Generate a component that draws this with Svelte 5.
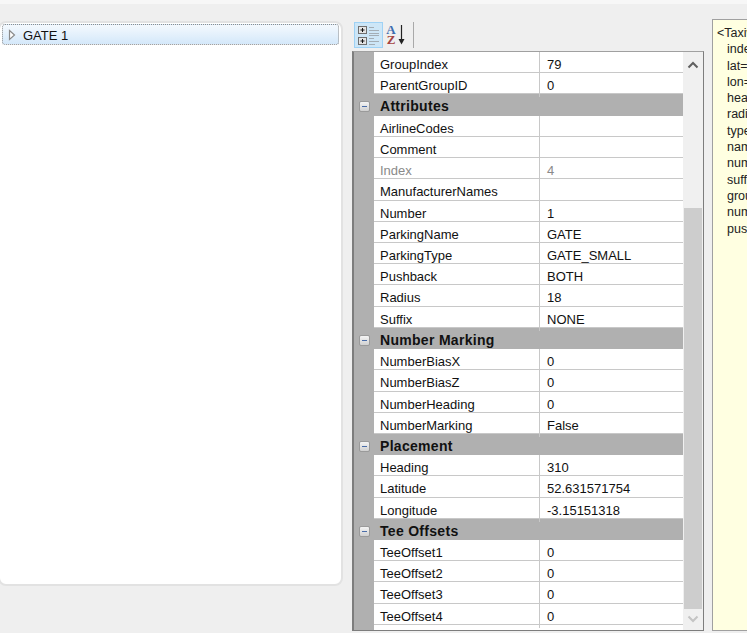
<script>
  const sections = [
    { rows: [['GroupIndex', '79'], ['ParentGroupID', '0']] },
    {
      title: 'Attributes',
      rows: [
        ['AirlineCodes', ''],
        ['Comment', ''],
        ['Index', '4', true],
        ['ManufacturerNames', ''],
        ['Number', '1'],
        ['ParkingName', 'GATE'],
        ['ParkingType', 'GATE_SMALL'],
        ['Pushback', 'BOTH'],
        ['Radius', '18'],
        ['Suffix', 'NONE']
      ]
    },
    {
      title: 'Number Marking',
      rows: [
        ['NumberBiasX', '0'],
        ['NumberBiasZ', '0'],
        ['NumberHeading', '0'],
        ['NumberMarking', 'False']
      ]
    },
    {
      title: 'Placement',
      rows: [
        ['Heading', '310'],
        ['Latitude', '52.631571754'],
        ['Longitude', '-3.15151318']
      ]
    },
    {
      title: 'Tee Offsets',
      rows: [
        ['TeeOffset1', '0'],
        ['TeeOffset2', '0'],
        ['TeeOffset3', '0'],
        ['TeeOffset4', '0']
      ]
    }
  ];

  const xmlLines = [
    '<TaxiwayParking',
    'index="4"',
    'lat="52.631571754"',
    'lon="-3.15151318"',
    'heading="310"',
    'radius="18"',
    'type="GATE_SMALL"',
    'name="GATE"',
    'number="1"',
    'suffix="NONE"',
    'groupIndex="79"',
    'numberMarking="False"',
    'pushBack="BOTH"'
  ];
</script>

<div class="window">
  <div class="tree">
    <div class="tree-row">
      <svg class="expander" width="8" height="12" viewBox="0 0 8 12">
        <path d="M1.5 1.5 L6.5 6 L1.5 10.5 Z" fill="#fff" stroke="#8a8a8a" stroke-width="1.2" />
      </svg>
      <span class="tree-label">GATE 1</span>
    </div>
  </div>

  <div class="props">
    <div class="toolbar">
      <div class="tool active">
        <svg width="22" height="20" viewBox="0 0 22 20">
          <rect x="0.5" y="1.5" width="8" height="7" fill="#e4e4e4" stroke="#6f6f6f" />
          <path d="M2.500 5 H6.500 M4.500 3 V7" stroke="#111" stroke-width="1" />
          <rect x="0.5" y="12.5" width="8" height="7" fill="#e4e4e4" stroke="#6f6f6f" />
          <path d="M2.500 16 H6.500 M4.500 14 V18" stroke="#111" stroke-width="1" />
          <path d="M11 2.500 H16 M11 5.500 H21 M11 8.500 H21 M11 10.500 H21 M11 13.500 H16 M11 16.500 H21 M11 19.500 H17" stroke="#a3adb5" stroke-width="1" />
        </svg>
      </div>
      <div class="tool sort">
        <div class="az">
          <span class="a">A</span>
          <span class="z">Z</span>
        </div>
        <svg width="7" height="20" viewBox="0 0 7 20">
          <path d="M3.500 0 V16" stroke="#222" stroke-width="1.2" />
          <path d="M0.500 14 H6.500 L3.500 19.500 Z" fill="#222" />
        </svg>
      </div>
      <div class="separator"></div>
    </div>

    <div class="grid">
      <div class="list">
        {#each sections as section}
          {#if section.title}
            <div class="row head">
              <div class="gutter">
                <div class="minus"></div>
              </div>
              <div class="head-title">{section.title}</div>
            </div>
          {/if}
          {#each section.rows as row}
            <div class="row">
              <div class="gutter"></div>
              <div class="name" class:muted={row[2]}>{row[0]}</div>
              <div class="value" class:muted={row[2]}>{row[1]}</div>
            </div>
          {/each}
        {/each}
      </div>
      <div class="scrollbar">
        <div class="thumb-space">
          <svg width="12" height="8" viewBox="0 0 12 8">
            <path d="M1.500 6.500 L6 2 L10.500 6.500" fill="none" stroke="#606060" stroke-width="2" />
          </svg>
        </div>
        <div class="thumb"></div>
        <div class="arrow-down">
          <svg width="12" height="8" viewBox="0 0 12 8">
            <path d="M1.500 1.500 L6 6 L10.500 1.500" fill="none" stroke="#c4c4c4" stroke-width="2" />
          </svg>
        </div>
      </div>
    </div>
  </div>

  <div class="xml">
    {#each xmlLines as line, i}
      <div class="xml-line" class:indent={i > 0}>{line}</div>
    {/each}
  </div>
</div>

<style>
  :global(body) {
    margin: 0;
    background: #efefef;
  }

  .window {
    width: 747px;
    height: 633px;
    box-sizing: border-box;
    display: flex;
    overflow: hidden;
    background: #efefef;
    border-top: 4px solid #f7f7f7;
    font-family: "Liberation Sans", Arial, sans-serif;
    font-size: 13px;
    color: #111;
  }

  .tree {
    flex: none;
    width: 345px;
    height: 565px;
    box-sizing: border-box;
    margin: 17px 9px 0 -2px;
    padding: 1px 2px;
    background: #fff;
    border: 2px solid #e2e2e2;
    border-radius: 8px;
  }

  .tree-row {
    height: 21px;
    box-sizing: border-box;
    display: flex;
    align-items: center;
    gap: 7px;
    padding-left: 5px;
    border: 1px dotted #8d8d8d;
    border-radius: 3px;
    background: linear-gradient(#f4f9fe, #d4e8fa);
    font-size: 13px;
  }

  .tree-label {
    padding-top: 1px;
  }

  .expander {
    flex: none;
  }

  .props {
    flex: none;
    width: 352px;
    display: flex;
    flex-direction: column;
    margin: 17px 8px 0 0;
  }

  .toolbar {
    height: 30px;
    flex: none;
    display: flex;
    align-items: flex-start;
    padding: 1px 0 0 2px;
    box-sizing: border-box;
  }

  .tool {
    width: 29px;
    height: 26px;
    box-sizing: border-box;
    display: flex;
    align-items: center;
    justify-content: center;
    border: 1px solid transparent;
  }

  .tool.active {
    background: #cde6f7;
    border-color: #9fd2f5;
  }

  .tool.sort {
    width: 28px;
    gap: 2px;
    padding-right: 3px;
  }

  .az {
    display: flex;
    flex-direction: column;
    align-items: center;
    font-family: "Liberation Serif", serif;
    font-weight: bold;
    font-size: 13px;
    line-height: 10px;
  }

  .a {
    color: #3d6cb0;
  }

  .z {
    color: #a5433f;
  }

  .separator {
    width: 1px;
    height: 26px;
    margin-left: 2px;
    background: #a9a9a9;
  }

  .grid {
    flex: none;
    height: 580px;
    box-sizing: border-box;
    display: flex;
    background: #fff;
    border: 1px solid #7d7d7d;
    border-top-color: #a0a0a0;
    border-left-width: 2px;
    overflow: hidden;
  }

  .list {
    flex: none;
    width: 329px;
    background: linear-gradient(90deg, #b0b0b0 20px, #fff 20px);
  }

  .row {
    display: grid;
    grid-template-columns: 20px 166px 1fr;
    height: 21.23px;
    box-sizing: border-box;
    border-bottom: 1px solid #c8c8c8;
    line-height: 23px;
  }

  .row.head {
    background: #b0b0b0;
    border-bottom: none;
  }

  .gutter {
    background: #b0b0b0;
    display: flex;
    align-items: center;
    justify-content: center;
    margin-bottom: -1px;
  }

  .minus {
    width: 11px;
    height: 11px;
    box-sizing: border-box;
    border: 1px solid #9a9a9a;
    border-radius: 2px;
    background: linear-gradient(#f4f4f4, #d0d0d0);
    position: relative;
  }

  .minus::after {
    content: "";
    position: absolute;
    left: 2px;
    right: 2px;
    top: 4px;
    height: 1px;
    background: #4a6da8;
  }

  .head-title {
    grid-column: 2 / 4;
    padding: 1px 0 0 6px;
    font-weight: bold;
    font-size: 14px;
    letter-spacing: 0.3px;
    color: #111;
  }

  .name {
    padding: 1px 0 0 6px;
    border-right: 1px solid #c8c8c8;
    white-space: nowrap;
  }

  .value {
    padding: 1px 0 0 7px;
    white-space: nowrap;
  }

  .muted {
    color: #8a8a8a;
  }

  .scrollbar {
    flex: 1;
    display: flex;
    flex-direction: column;
    background: #f0f0f0;
  }

  .thumb-space {
    height: 156px;
    flex: none;
    display: flex;
    justify-content: center;
    padding-top: 9px;
    box-sizing: border-box;
  }

  .thumb {
    height: 401px;
    flex: none;
    background: #cdcdcd;
    margin: 0 1px;
  }

  .arrow-down {
    flex: 1;
    display: flex;
    justify-content: center;
    padding-top: 6px;
  }

  .xml {
    flex: 1;
    height: 612px;
    box-sizing: border-box;
    margin-top: 15px;
    padding: 5px 0 0 4px;
    background: #ffffe1;
    border: 1px solid #a0a0a0;
    border-right: none;
    font-size: 12.5px;
    line-height: 16.3px;
    color: #222;
    white-space: nowrap;
    overflow: hidden;
  }

  .indent {
    padding-left: 10px;
  }
</style>
